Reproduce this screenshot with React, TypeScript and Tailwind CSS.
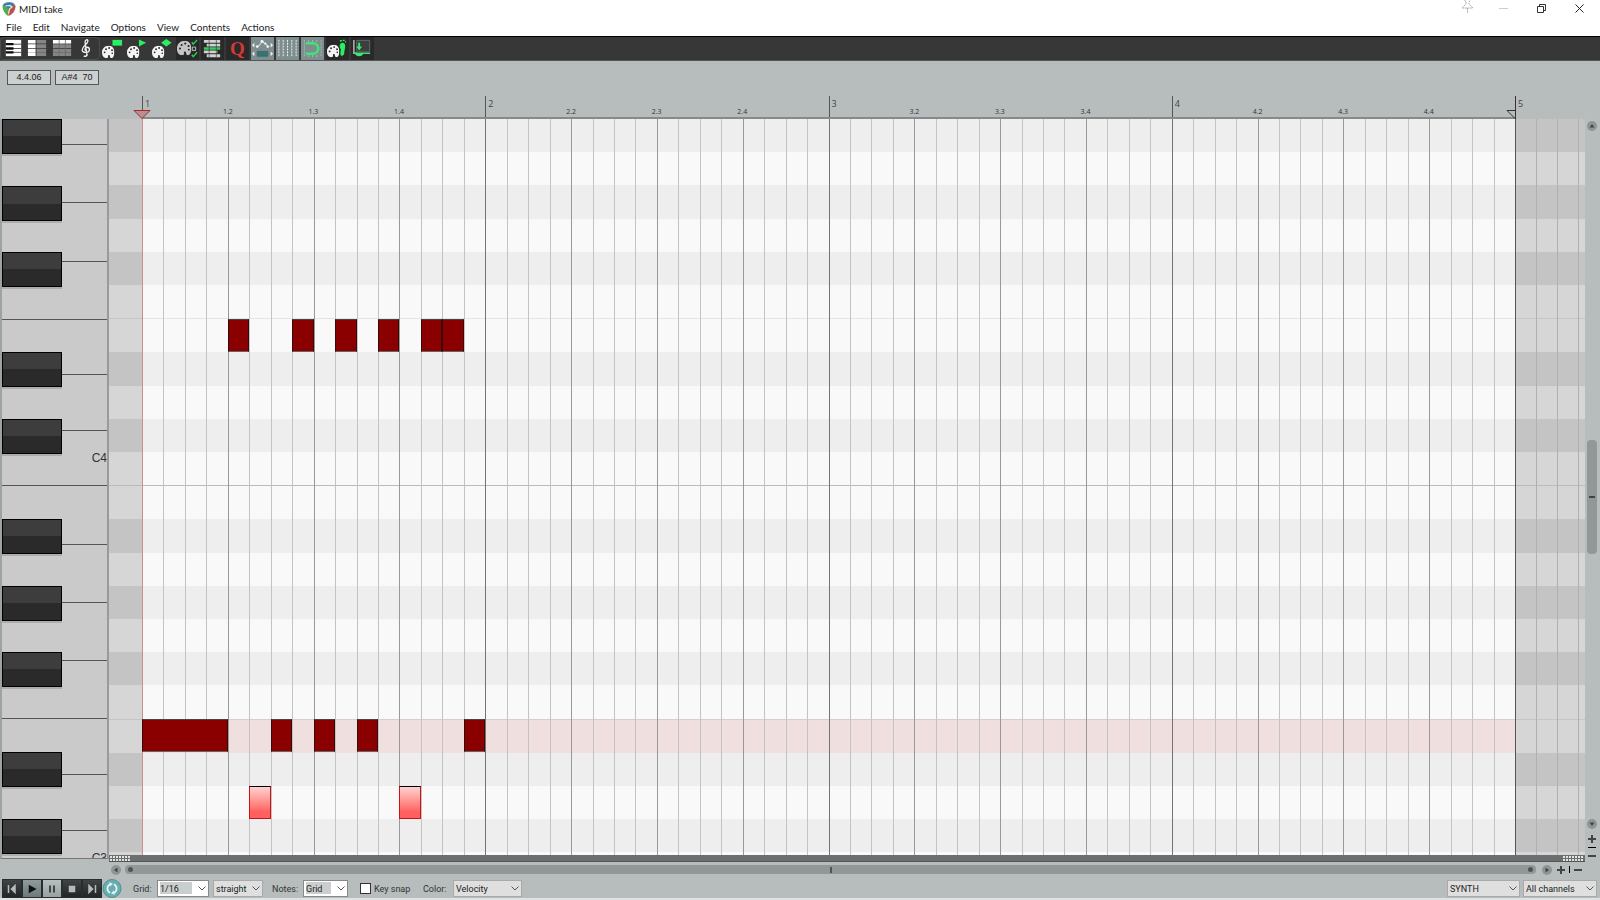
import type { CSSProperties, ReactNode } from "react";

const STEPS = 64;
const ROW_UNITS = 2208;
type RowKind = "black" | "white";

const rows: { note: string; kind: RowKind }[] = [
  "A#4", "A4", "G#4", "G4", "F#4", "F4", "E4", "D#4", "D4", "C#4", "C4",
  "B3", "A#3", "A3", "G#3", "G3", "F#3", "F3", "E3", "D#3", "D3", "C#3", "C3",
].map((note) => ({ note, kind: note.includes("#") ? "black" : "white" }));

const notes = [
  ...[4, 7, 9, 11, 13, 14].map((start) => ({ start, length: 1, row: 6, soft: false })),
  { start: 0, length: 4, row: 18, soft: false },
  ...[6, 8, 10, 15].map((start) => ({ start, length: 1, row: 18, soft: false })),
  ...[5, 12].map((start) => ({ start, length: 1, row: 20, soft: true })),
];

const whiteKeys: { name: string; size: number }[] = [
  { name: "A4 upper", size: 255 },
  { name: "A4", size: 583 },
  { name: "G4", size: 583 },
  { name: "F4", size: 583 },
  { name: "E4", size: 556 },
  { name: "D4", size: 556 },
  { name: "C4", size: 556 },
  { name: "B3", size: 583 },
  { name: "A3", size: 583 },
  { name: "G3", size: 583 },
  { name: "F3", size: 583 },
  { name: "E3", size: 556 },
  { name: "D3", size: 556 },
  { name: "C3", size: 556 },
];

const blackRows = rows.map((r, i) => ({ ...r, i })).filter((r) => r.kind === "black");

function Palette({ x = 1, y = 9, size = 13, color = "#f4f4f4" }: { x?: number; y?: number; size?: number; color?: string }) {
  return (
    <svg x={x} y={y} width={size} height={size} viewBox="0 0 26 26">
      <path d="M14 0C6 0 0 6 0 14c0 7 3 12 9 12 4 0 4-2 3.500-4.500 0-2.500 3.500-3 4-.5 0 3 .5 5 4.500 5 3-1 5-6 5-12C26 6 22 0 14 0Z" fill={color} />
      <g fill="#262626">
        <circle cx="5.500" cy="14" r="1.900" />
        <circle cx="8.500" cy="7.500" r="1.900" />
        <circle cx="15" cy="5" r="1.900" />
        <circle cx="21" cy="9.500" r="1.900" />
        <circle cx="21.500" cy="16" r="1.700" />
      </g>
    </svg>
  );
}

const toolbar: { label: string; look: string; art: ReactNode }[] = [
  {
    label: "Piano roll view",
    look: "",
    art: (
      <>
        <path d="M4 3h16v17H4z" fill="#fff" />
        <path d="M4 7.500h16M4 12h16M4 16h16" stroke="#555" />
        <path d="M4 7.500h8M4 12h8M4 16h8" stroke="#0c0c0c" strokeWidth="2.400" />
      </>
    ),
  },
  {
    label: "Named notes view",
    look: "",
    art: (
      <>
        <path d="M2 5h8M2 9.500h8M2 14h8M2 18h8" stroke="#fff" strokeWidth="3.700" />
        <path d="M11 5h10M11 9.500h10M11 14h10M11 18h10" stroke="#858585" strokeWidth="3.700" />
      </>
    ),
  },
  {
    label: "Event list view",
    look: "",
    art: (
      <>
        <path d="M2 5h19" stroke="#fff" strokeWidth="3.700" />
        <path d="M2 9.500h19M2 14h19M2 18h19" stroke="#858585" strokeWidth="3.700" />
        <path d="M8.500 3v17M15 3v17" stroke="#666" strokeWidth=".8" />
      </>
    ),
  },
  {
    label: "Musical notation view",
    look: "",
    art: (
      <>
        <path
          d="M12.500 18.500 10.500 5.500c-.2-2.500 3-4 3-1.200 0 3.200-6 5.200-6 9.200 0 3.500 7.500 3.500 7.500-.5 0-3-4.500-3-4.500-.2 0 1 .8 1.600 1.600 1.600"
          fill="none"
          stroke="#f2f2f2"
          strokeWidth="1.400"
        />
        <path d="M12.500 18c.3 2-2 2.800-3.200 1.500" fill="none" stroke="#f2f2f2" strokeWidth="1.600" />
      </>
    ),
  },
  { label: "Color by rectangle", look: "", art: <><Palette /><path d="M12 3h10v6H12z" fill="#28f05f" /></> },
  { label: "Color by triangle", look: "", art: <><Palette /><path d="M13.500 2.500 21 6l-7.500 4z" fill="#28f05f" /></> },
  { label: "Color by diamond", look: "", art: <><Palette /><path d="m10.500 6 5.500-4 5.500 4-5.500 4z" fill="#28f05f" /></> },
  {
    label: "Color options",
    look: "bg-[#292929]",
    art: (
      <>
        <Palette x={1} y={4} size={15} color="#c4c4c4" />
        <path d="M17 10.500h3.500V14H17z" fill="none" stroke="#c4c4c4" />
        <path d="m16.500 5.500 1.500 2L22 3M16.500 18.500l1.500 2 4-4.500" fill="none" stroke="#28d04f" strokeWidth="1.500" />
      </>
    ),
  },
  {
    label: "Media item lane",
    look: "bg-[#292929]",
    art: (
      <>
        <path d="M3 4.500h17M6 8.500h14M3 15.500h14M6 19.500h14" stroke="#d2d2d2" strokeWidth="3" />
        <path d="M3 12h17" stroke="#35cf5d" strokeWidth="2.600" />
        <path d="M8.500 3v18M16 3v18" stroke="#292929" strokeWidth=".6" />
      </>
    ),
  },
  { label: "Quantize", look: "bg-[#292929]", art: null },
  {
    label: "Step envelope",
    look: "bg-[#7e8e8f]",
    art: (
      <>
        <path d="m6 10 2-.5 3.500-4.500 3.500 2 3 3" fill="none" stroke="#f2f2f2" />
        <g fill="#f2f2f2">
          <circle cx="6.500" cy="10" r="1.400" /><circle cx="11.500" cy="4.500" r="1.600" /><circle cx="15" cy="7" r="1.200" /><circle cx="17.500" cy="10" r="1.400" />
          <path d="M3.500 6 1 8.500 3.500 11zM20.500 6 23 8.500 20.500 11zM3.500 15 1 17.500 3.500 20zM20.500 15l2.500 2.500-2.500 2.500z" />
        </g>
        <path d="M6.500 15h11v5h-11z" fill="#2d7778" stroke="#4b6466" />
      </>
    ),
  },
  {
    label: "Show grid",
    look: "bg-[#7e8e8f]",
    art: <path d="M3 3v18M7.500 3v18M12 3v18M16.500 3v18M21 3v18" stroke="#f0f4f4" strokeDasharray="2 1" />,
  },
  {
    label: "Snap to grid",
    look: "bg-[#7e8e8f]",
    art: (
      <>
        <path d="M3.500 3v18M8 3v3M8 19v2M12 3v3M12 19v2M16.500 3v3M16.500 19v2M21 3v18" stroke="#a9b8b8" strokeDasharray="2 1" />
        <path d="M5 6.500h7c8 0 8 11 0 11H5" fill="none" stroke="#3fe673" strokeWidth="2.600" />
      </>
    ),
  },
  {
    label: "Step input",
    look: "bg-[#292929]",
    art: (
      <>
        <Palette x={1} y={8} size={13} />
        <path d="M15 7c2-2 5-1 5 2 0 4-1 5-1 8s-4 4-4 0c0-2 1-3 0-5s-1-3 0-5Z" fill="#28f05f" />
        <path d="M14.500 4h2M17.500 3.500h2M20 5h1" stroke="#28f05f" strokeWidth="1.500" />
      </>
    ),
  },
  {
    label: "Dock editor",
    look: "bg-[#292929]",
    art: (
      <>
        <path d="M6 3.500h13.500v12H6z" fill="#3c3f40" stroke="#656b6c" />
        <path d="M3 3v14h3" fill="none" stroke="#b9b9b9" strokeWidth="1.500" />
        <path d="M8.500 6v5" stroke="#3fe673" strokeWidth="2" />
        <path d="M5.500 10h6l-3 4z" fill="#3fe673" />
        <path d="M3 17h17" stroke="#3fe673" strokeWidth="1.500" />
        <path d="M4 17h9c-1 4-8 4-9 0Z" fill="#3fe673" />
      </>
    ),
  },
];

function TitleBar() {
  return (
    <header className="flex h-[18px] shrink-0 items-center bg-white pr-4">
      <svg className="ml-[2px] size-[14px]" viewBox="0 0 28 28" aria-hidden="true">
        <path d="M14 0c7 0 12 3 13 8L14 13 1 8C2 3 7 0 14 0Z" fill="#6f97bd" />
        <path d="M1 8c0 8 4 15 11 20l2-14L4 5Z" fill="#4fae45" />
        <path d="M27 8c0 9-5 16-14 20l-1-14 9-9Z" fill="#b5544f" />
        <path d="M3 6c6-5 15-6 21-2l-9 6v5Z" fill="#2f7fae" />
        <path d="m7 8 9-1 4 3-5 4-2 9" fill="none" stroke="#e4e8ea" strokeWidth="2.500" />
      </svg>
      <h1 className="ml-[3px] font-[Lato,sans-serif] text-[10px] leading-[14px] text-[#222]">MIDI take</h1>
      <div className="ml-auto flex h-full items-start">
        <button aria-label="Pin" className="mr-[25px]">
          <svg className="h-[13px] w-[13px]" viewBox="0 0 13 13" fill="none" stroke="#b0b0b0">
            <path d="M4 0v1l1 1v2L1 8h11L8 4V2l1-1V0M6.500 8v5" strokeDasharray="2 .6" />
          </svg>
        </button>
        <button aria-label="Minimize" className="mr-[29px] pt-1">
          <svg className="size-[9px]" viewBox="0 0 9 9"><path d="M0 4.500h9" stroke="#ccc" /></svg>
        </button>
        <button aria-label="Restore" className="mr-[29px] pt-1">
          <svg className="size-[9px]" viewBox="0 0 9 9" fill="none" stroke="#333">
            <path d="M.5 2.500h6v6h-6zM2.500 2.500v-2h6v6h-2" />
          </svg>
        </button>
        <button aria-label="Close" className="pt-1">
          <svg className="size-[9px]" viewBox="0 0 9 9"><path d="m.5.500 8 8M8.500.500l-8 8" stroke="#222" /></svg>
        </button>
      </div>
    </header>
  );
}

function MenuBar() {
  return (
    <nav className="flex h-[18px] shrink-0 items-start gap-[11px] bg-white pl-[6px] pt-[2px]">
      {["File", "Edit", "Navigate", "Options", "View", "Contents", "Actions"].map((m) => (
        <button key={m} className="font-[Lato,sans-serif] text-[10px] leading-[14px] text-[#222]">{m}</button>
      ))}
    </nav>
  );
}

function Toolbar() {
  return (
    <div className="flex h-[25px] shrink-0 border-b border-t border-b-[#555] border-t-black bg-[#373737]" role="toolbar" aria-label="MIDI tools">
      <div className="flex w-[100px] rounded-[4px] border border-[#4e4e4e]">
        {toolbar.slice(0, 4).map((t) => <ToolButton key={t.label} {...t} />)}
      </div>
      {toolbar.slice(4).map((t) => <ToolButton key={t.label} {...t} />)}
    </div>
  );
}

function ToolButton({ label, look, art }: (typeof toolbar)[number]) {
  return (
    <button aria-label={label} className="flex w-[25px] shrink items-center justify-center">
      <span className={`flex h-[23px] w-[23px] shrink-0 items-center justify-center ${look}`}>
        {art ? (
          <svg className="size-[23px]" viewBox="0 0 24 24">{art}</svg>
        ) : (
          <span className="font-['Liberation_Serif',serif] text-[19px] font-bold leading-[23px] text-[#d23a36]">Q</span>
        )}
      </span>
    </button>
  );
}

function Ruler() {
  const bars = [1, 2, 3, 4];
  return (
    <div className="flex h-[58px] shrink-0 flex-col">
      <div className="flex h-[35px] gap-1 pl-[7px] pt-[9px] font-['Liberation_Sans',sans-serif] text-[9px] leading-[13px] text-[#222]">
        <output className="h-[15px] w-[44px] border border-[#555] bg-[#cdd0d0] text-center">4.4.06</output>
        <output className="h-[15px] w-[44px] whitespace-pre border border-[#555] bg-[#cdd0d0] text-center">A#4  70</output>
      </div>
      <div className="flex h-[23px]">
        <div className="w-[142px] shrink-0" />
        <div className="relative grid flex-1 grid-cols-4 border-b-2 border-[#858a8a]">
          {bars.map((b) => (
            <div key={b} className="relative border-l border-[#555] pl-[2px] text-[9px] leading-4 text-[#444]">
              {b}
              {[2, 3, 4].map((q) => (
                <span
                  key={q}
                  className="absolute top-[11px] -translate-x-1/2 text-[7px] leading-[10px] text-[#333]"
                  style={{ left: `${(q - 1) * 25 - 0.2}%` }}
                >
                  {b}.{q}
                </span>
              ))}
            </div>
          ))}
          <svg className="absolute -left-[9px] top-[14px] h-[10px] w-[18px]" viewBox="0 0 18 10">
            <path d="M1 .5h16L9 8.500Z" fill="#b98e8e" stroke="#a5292d" />
          </svg>
          <svg className="absolute right-0 top-[14px] h-[9px] w-[9px]" viewBox="0 0 9 9">
            <path d="M9 .5H1L9 8.500" fill="none" stroke="#333" />
          </svg>
        </div>
        <div className="w-[85px] shrink-0 border-l border-[#333] pl-[2px] text-[9px] leading-4 text-[#444]">5</div>
      </div>
    </div>
  );
}

function Keyboard() {
  return (
    <div className="flex w-[109px] shrink-0 pb-[3px]">
      <div className="relative flex-1 overflow-hidden border-b border-l-2 border-r-2 border-b-[#777] border-l-[#9da2a2] border-r-[#979b9b] bg-[#cacaca]">
        <div className="flex h-[103.8%] flex-col">
          {whiteKeys.map((k) => (
            <div
              key={k.name}
              className="flex min-h-0 basis-0 items-center justify-end border-b border-[#555] font-['Liberation_Sans',sans-serif] text-[12px] leading-4 text-[#333]"
              style={{ flexGrow: k.size }}
            >
              {k.name.startsWith("C") ? k.name : null}
            </div>
          ))}
        </div>
        {blackRows.map((r) => (
          <div
            key={r.note}
            className="absolute left-0 h-[35px] w-[60px] border border-black bg-linear-to-b from-[#3d3d3d] from-50% to-[#2a2a2a] to-50% shadow-[0_2px_0_#adadad]"
            style={{ top: `${(r.i * 100 * 99.6) / ROW_UNITS}%` }}
          />
        ))}
      </div>
    </div>
  );
}

function Rows({ outside = false }: { outside?: boolean }) {
  return (
    <div className="flex h-full flex-col">
      {rows.map((r) => {
        const color = outside
          ? r.kind === "black" ? "bg-[#c4c4c4]" : "bg-[#d6d6d6]"
          : r.note === "E3" ? "bg-[#efdfdf]" : r.kind === "black" ? "bg-[#eeeeee]" : "bg-[#f9f9f9]";
        const line = r.note === "B3" ? "border-t border-[#bbb]" : r.note.startsWith("E") ? "border-t border-black/8" : "";
        return (
          <div
            key={r.note}
            className={`min-h-0 basis-0 ${color} ${line}`}
            style={{ flexGrow: r.note === "C3" ? 8 : 100 }}
          />
        );
      })}
    </div>
  );
}

function NoteArea() {
  return (
    <div className="flex min-h-0 flex-1">
      <div className="w-[33px] shrink-0"><Rows outside /></div>
      <div className="relative flex-1">
        <Rows />
        <div className="absolute inset-0 grid grid-cols-[repeat(64,minmax(0,1fr))]">
          {Array.from({ length: STEPS }, (_, i) => (
            <div
              key={i}
              className={`border-l ${i === 0 ? "border-[#c98f8f]" : i % 16 === 0 ? "border-[#747474]" : i % 4 === 0 ? "border-[#999]" : "border-[#c3c3c3]"}`}
            />
          ))}
        </div>
        {notes.map((n) => {
          const place: CSSProperties = {
            left: `${(n.start * 100) / STEPS}%`,
            width: `${(n.length * 100) / STEPS}%`,
            top: `${(n.row * 10000) / ROW_UNITS}%`,
            height: `${10000 / ROW_UNITS}%`,
          };
          return (
            <div
              key={`${n.row}-${n.start}`}
              style={place}
              className={
                n.soft
                  ? "absolute border border-[#c81414] border-t-black bg-linear-to-b from-[#ffd0d0] to-[#ff5f5f] to-80%"
                  : "absolute border border-[#3a0a0a] border-b-[#666] border-t-[#444] bg-[#8a0000]"
              }
            />
          );
        })}
      </div>
      <div className="relative w-[70px] shrink-0">
        <Rows outside />
        <div className="absolute inset-0 flex border-l border-[#555]">
          {[1, 2, 3].map((i) => <div key={i} className="w-[21px] border-r border-[#b0b0b0]" />)}
        </div>
      </div>
    </div>
  );
}

function Grip() {
  return (
    <svg className="h-[5px] w-[21px]" viewBox="0 0 21 5" aria-hidden="true">
      <path d="M0 1h21M0 4h21" stroke="#e4e4e4" strokeWidth="2" strokeDasharray="2 1" />
    </svg>
  );
}

function RoundArrow({ label, d }: { label: string; d: string }) {
  return (
    <button aria-label={label} className="size-[10px] shrink-0">
      <svg className="size-[10px]" viewBox="0 0 10 10">
        <circle cx="5" cy="5" r="5" fill="#8f9494" />
        <path d={d} fill="#444" />
      </svg>
    </button>
  );
}

function ZoomMark({ label, plus = false }: { label: string; plus?: boolean }) {
  return (
    <button aria-label={label} className="size-[8px] shrink-0">
      <svg className="size-[8px]" viewBox="0 0 8 8">
        <path d={plus ? "M0 4h8M4 0v8" : "M0 4h8"} stroke="#444" strokeWidth="2" />
      </svg>
    </button>
  );
}

function VerticalScroll() {
  return (
    <div className="flex w-[15px] shrink-0 flex-col items-center pr-px pt-[2px]">
      <RoundArrow label="Scroll up" d="M2.500 6.500h5L5 3z" />
      <div className="flex w-[10px] flex-1 flex-col">
        <div className="grow-[309] basis-0" />
        <div className="flex grow-[113] basis-0 items-center justify-center rounded-[4px] bg-[#929797]">
          <div className="h-[2px] w-[6px] bg-[#444]" />
        </div>
        <div className="grow-[265] basis-0" />
      </div>
      <RoundArrow label="Scroll down" d="M2.500 3.500h5L5 7z" />
      <div className="flex flex-col items-center gap-1 pb-[2px] pt-[6px]">
        <ZoomMark label="Zoom in vertically" plus />
        <div className="h-px w-[8px] bg-black" />
        <ZoomMark label="Zoom out vertically" />
      </div>
    </div>
  );
}

function HorizontalScroll() {
  return (
    <div className="flex h-4 shrink-0 items-center gap-1 pb-px pl-[111px] pr-[18px]">
      <RoundArrow label="Scroll left" d="M6.500 2.500v5L3 5z" />
      <div className="flex h-[9px] flex-1 items-center justify-between rounded-[4px] bg-[#929797] px-[3px]">
        <div className="size-[5px] rounded-full bg-[#505454]" />
        <div className="h-[6px] w-[2px] bg-[#505454]" />
        <div className="size-[5px] rounded-full bg-[#505454]" />
      </div>
      <div className="flex items-center gap-1 pl-[2px]">
        <RoundArrow label="Scroll right" d="M3.500 2.500v5L7 5z" />
        <div className="flex items-center gap-1 pl-px">
          <ZoomMark label="Zoom in horizontally" plus />
          <div className="h-[7px] w-px bg-black" />
          <ZoomMark label="Zoom out horizontally" />
        </div>
      </div>
    </div>
  );
}

const transport: { label: string; d: string; look: string; ink: string }[] = [
  { label: "Go to start", d: "M6.500 6v8M13 6.500 9.500 10l3.500 3.500z", look: "bg-linear-to-b from-[#404444] to-[#222626]", ink: "#b5baba" },
  { label: "Play", d: "M7.500 7v6l5.500-3z", look: "bg-linear-to-b from-[#8f9a9b] to-[#6d797a]", ink: "#111" },
  { label: "Pause", d: "M8 6.500v7M12 6.500v7", look: "bg-linear-to-b from-[#b8bfbf] to-[#98a1a1]", ink: "#222" },
  { label: "Stop", d: "M7.500 7.500h5v5h-5z", look: "bg-linear-to-b from-[#404444] to-[#222626]", ink: "#b5baba" },
  { label: "Go to end", d: "M13.500 6v8M7 6.500l3.500 3.500L7 13.500z", look: "bg-linear-to-b from-[#404444] to-[#222626]", ink: "#b5baba" },
];

function Picker({ id, value, width, field = false }: { id: string; value: string; width: string; field?: boolean }) {
  return (
    <div className={`relative h-[17px] ${width}`}>
      <select
        id={id}
        aria-label={id}
        defaultValue={value}
        className={`block size-full appearance-none border pl-[2px] text-[9px] leading-[14px] text-[#222] ${
          field
            ? "border-[#888] bg-white bg-[linear-gradient(#cbcece,#cbcece)] bg-[length:calc(100%-18px)_12px] bg-[position:2px_1px] bg-no-repeat"
            : "border-[#aaa] bg-[#dfdfdf]"
        }`}
      >
        <option>{value}</option>
      </select>
      <svg className="pointer-events-none absolute right-[3px] top-[6px] h-[5px] w-[8px]" viewBox="0 0 8 5">
        <path d="m.5.500 3.500 3.500L7.500.500" fill="none" stroke="#555" />
      </svg>
    </div>
  );
}

function BottomBar() {
  return (
    <footer className="flex h-[22px] shrink-0 items-center border-b-2 border-[#dfe3e3] pl-[2px] pr-[3px] pt-px font-[Roboto,sans-serif] text-[9px] leading-[14px] text-[#333]">
      <div className="flex">
        {transport.map((t) => (
          <button key={t.label} aria-label={t.label} className={`h-[19px] w-[20px] border border-[#2a2d2d] ${t.look}`}>
            <svg className="-m-px size-[20px]" viewBox="0 0 20 20">
              <path d={t.d} fill={t.ink} stroke={t.ink} strokeWidth="1.500" />
            </svg>
          </button>
        ))}
        <button aria-label="Repeat" className="h-[19px] w-[20px]">
          <svg className="h-[19px] w-[20px]" viewBox="0 0 20 20">
            <circle cx="10" cy="10" r="9.500" fill="#66aeb2" stroke="#4e8f93" />
            <path d="M8 5.500A5 5 0 0 0 8 14.500M12 5.500a5 5 0 0 1 0 9" fill="none" stroke="#e8f4f4" strokeWidth="1.800" />
            <path d="M7 3.500 11 5 8 8zM13 16.500 9 15l3-3z" fill="#e8f4f4" />
          </svg>
        </button>
      </div>
      <label htmlFor="Grid" className="ml-[11px] w-[24px]">Grid:</label>
      <Picker id="Grid" value="1/16" width="w-[52px]" field />
      <div className="ml-1"><Picker id="Grid type" value="straight" width="w-[50px]" /></div>
      <label htmlFor="Notes" className="ml-[9px] w-[31px]">Notes:</label>
      <Picker id="Notes" value="Grid" width="w-[45px]" field />
      <label className="ml-3 flex w-[51px] items-center gap-[3px] whitespace-nowrap">
        <input type="checkbox" className="size-[11px] shrink-0 appearance-none border border-[#333] bg-white" />
        Key snap
      </label>
      <label htmlFor="Color" className="ml-3 w-[30px]">Color:</label>
      <Picker id="Color" value="Velocity" width="w-[69px]" />
      <div className="ml-auto flex gap-[3px]">
        <Picker id="Track" value="SYNTH" width="w-[73px]" />
        <Picker id="Channel" value="All channels" width="w-[74px]" />
      </div>
    </footer>
  );
}

export default function App() {
  return (
    <div className="flex h-screen flex-col overflow-hidden bg-[#b7bdbd] font-['Open_Sans',sans-serif]">
      <TitleBar />
      <MenuBar />
      <Toolbar />
      <Ruler />
      <main className="flex min-h-0 flex-1">
        <Keyboard />
        <div className="flex min-w-0 flex-1 flex-col">
          <NoteArea />
          <div className="flex h-[7px] shrink-0 items-center justify-between border-b border-[#555] bg-[#6b6f6f] px-px">
            <Grip />
            <Grip />
          </div>
        </div>
        <VerticalScroll />
      </main>
      <HorizontalScroll />
      <BottomBar />
    </div>
  );
}
